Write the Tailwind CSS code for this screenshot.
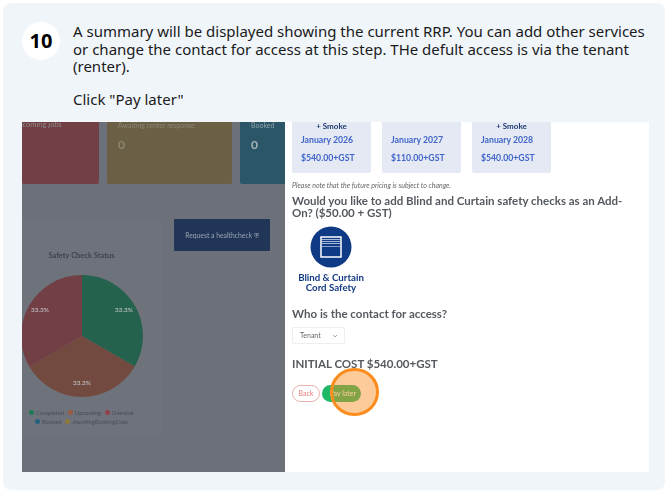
<!DOCTYPE html>
<html>
<head>
<meta charset="utf-8">
<script src="https://cdn.jsdelivr.net/npm/@tailwindcss/browser@4"></script>
</head>
<body class="bg-white font-['Noto_Sans',sans-serif]">
<div class="w-[670px] h-[496px] pt-[3px] pl-[3px] overflow-hidden">
  <div class="w-[662px] h-[487px] bg-[#f0f5fa] rounded-[8px] pt-[19px] pl-[19px] flex flex-col">
    <div class="flex h-[100px]">
      <div class="w-[38px] h-[38px] rounded-full bg-white flex items-center justify-center text-[20px] font-bold text-black shrink-0">10</div>
      <div class="ml-[13px] mt-[1px] w-[575px] text-[15px] leading-[17.5px] text-[#1a1a1a]">
        <p>A summary will be displayed showing the current RRP. You can add other services or change the contact for access at this step. THe defult access is via the tenant (renter).</p>
        <p class="mt-[15px]">Click "Pay later"</p>
      </div>
    </div>
    <div class="flex w-[627px] h-[350px] overflow-hidden font-['Lato',sans-serif] blur-[0.5px]">
      <div class="w-[263px] bg-[#6b7079] shrink-0 overflow-hidden">
        <div class="flex gap-[8px] h-[62px]">
          <div class="w-[77px] bg-[#723f45] rounded-b-[2px] text-[7.5px] text-[#8f8a8c] leading-[6px] overflow-hidden"><span class="block ml-[-9px] whitespace-nowrap">Upcoming jobs</span></div>
          <div class="w-[125px] bg-[#6b6045] rounded-b-[2px] px-[11px] text-[7px] text-[#8a8672] leading-[6px]"><span>Awaiting renter response</span><div class="mt-[11px] text-[12px] font-bold leading-[12px]">0</div></div>
          <div class="w-[45px] bg-[#2a5668] rounded-bl-[2px] px-[11px] text-[7px] text-[#8ea0a8] leading-[6px]"><span>Booked</span><div class="mt-[11px] text-[12px] font-bold leading-[12px] text-[#a8b4ba]">0</div></div>
        </div>
        <div class="flex mt-[35px]">
          <div class="ml-[-21px] w-[161px] h-[218px] bg-[#6d727b] rounded-br-[6px] flex flex-col items-center shrink-0">
            <div class="mt-[32px] text-[7.5px] font-bold text-[#3f444c] leading-[10px]">Safety Check Status</div>
            <svg class="mt-[14px]" width="122" height="122" viewBox="-61 -61 122 122">
              <path d="M0 0 L0 -61 A61 61 0 0 1 52.8 30.5 Z" fill="#25624d"/>
              <path d="M0 0 L52.8 30.5 A61 61 0 0 1 -52.8 30.5 Z" fill="#734a40"/>
              <path d="M0 0 L-52.8 30.5 A61 61 0 0 1 0 -61 Z" fill="#723f45"/>
              <text x="42" y="-24" font-size="6.5" fill="#c5c8cc" text-anchor="middle">33.3%</text>
              <text x="0" y="49" font-size="6.5" fill="#c5c8cc" text-anchor="middle">33.3%</text>
              <text x="-42" y="-24" font-size="6.5" fill="#c5c8cc" text-anchor="middle">33.3%</text>
            </svg>
            <div class="mt-[11px] flex flex-wrap justify-center gap-x-[4px] w-[115px] text-[5.8px] leading-[9px] text-[#4a4f57]">
              <span class="flex items-center gap-[2px]"><i class="w-[5px] h-[5px] rounded-full bg-[#1f7a55]"></i>Completed</span>
              <span class="flex items-center gap-[2px]"><i class="w-[5px] h-[5px] rounded-full bg-[#9a5a40]"></i>Upcoming</span>
              <span class="flex items-center gap-[2px]"><i class="w-[5px] h-[5px] rounded-full bg-[#92404a]"></i>Overdue</span>
              <span class="flex items-center gap-[2px]"><i class="w-[5px] h-[5px] rounded-full bg-[#25617a]"></i>Booked</span>
              <span class="flex items-center gap-[2px]"><i class="w-[5px] h-[5px] rounded-full bg-[#8f7a3c]"></i>AwaitingBookingDate</span>
            </div>
          </div>
          <div class="ml-[12px] w-[96px] h-[32px] bg-[#203557] rounded-[1px] flex items-center justify-center text-[6.8px] text-[#9aa3b2] shrink-0">Request a healthcheck ⛨</div>
        </div>
      </div>
      <div class="flex-1 bg-white pl-[7px] text-[#555a60]">
        <div class="flex gap-[11px] h-[51px]">
          <div class="w-[79px] bg-[#e4e9f4] rounded-b-[2px] flex flex-col text-[8.7px] font-bold text-[#4065c9] pl-[9px]">
            <div class="text-center text-[#1f3a72] text-[8px] leading-[8px] pr-[9px]">+ Smoke</div>
            <div class="mt-[4px] leading-[12px]">January 2026</div>
            <div class="mt-[6px] leading-[12px]">$540.00+GST</div>
          </div>
          <div class="w-[79px] bg-[#e4e9f4] rounded-b-[2px] flex flex-col text-[8.7px] font-bold text-[#4065c9] pl-[9px]">
            <div class="h-[8px]"></div>
            <div class="mt-[4px] leading-[12px]">January 2027</div>
            <div class="mt-[6px] leading-[12px]">$110.00+GST</div>
          </div>
          <div class="w-[79px] bg-[#e4e9f4] rounded-b-[2px] flex flex-col text-[8.7px] font-bold text-[#4065c9] pl-[9px]">
            <div class="text-center text-[#1f3a72] text-[8px] leading-[8px] pr-[9px]">+ Smoke</div>
            <div class="mt-[4px] leading-[12px]">January 2028</div>
            <div class="mt-[6px] leading-[12px]">$540.00+GST</div>
          </div>
        </div>
        <div class="mt-[8px] text-[7px] italic leading-[9px] text-[#666]">Please note that the future pricing is subject to change.</div>
        <div class="mt-[5px] w-[340px] text-[11.5px] font-bold leading-[12px]">Would you like to add Blind and Curtain safety checks as an Add-On? ($50.00 + GST)</div>
        <div class="mt-[7px] w-[78px] flex flex-col items-center">
          <svg width="42" height="42" viewBox="0 0 42 42"><circle cx="21" cy="21" r="20.5" fill="#0f3a85"/><rect x="11" y="11" width="20" height="20" fill="none" stroke="#fff" stroke-width="1.5"/><path d="M12 13.5h18M12 15.5h18M12 17.5h18" stroke="#b8c6de" stroke-width=".9"/><path d="M11.5 20.5h19" stroke="#dfe6f2" stroke-width=".6"/></svg>
          <div class="mt-[4px] text-[9.7px] font-bold leading-[10px] text-[#123a80] text-center whitespace-nowrap">Blind &amp; Curtain<br>Cord Safety</div>
        </div>
        <div class="mt-[15px] text-[11.5px] font-bold leading-[14px]">Who is the contact for access?</div>
        <div class="mt-[6px] w-[53px] h-[17px] border border-[#eeeeee] rounded-[2px] flex items-center pl-[7px] text-[7px] text-[#666]">Tenant<svg class="ml-[11px]" width="6" height="4" viewBox="0 0 6 4"><path d="M1 1l2 2 2-2" fill="none" stroke="#888" stroke-width=".7"/></svg></div>
        <div class="mt-[13px] text-[11.5px] font-bold leading-[14px]">INITIAL COST $540.00+GST</div>
        <div class="mt-[13px] flex items-center h-[18px] relative">
          <div class="w-[28px] h-[17px] border border-[#e8b0ac] rounded-full flex items-center justify-center text-[7px] text-[#e07a75]">Back</div>
          <div class="ml-[2px] w-[39px] h-[17px] rounded-full bg-[#1fb866] flex items-center justify-end pr-[5px] text-[7px] text-white">Pay later</div>
        </div>
      </div>
    </div>
  </div>
</div>
<div class="absolute left-[330px] top-[368px] w-[49px] h-[48px] rounded-full border-[3px] border-[#fb8c1e] bg-[#fb8c1e]/45"></div>
</body>
</html>
